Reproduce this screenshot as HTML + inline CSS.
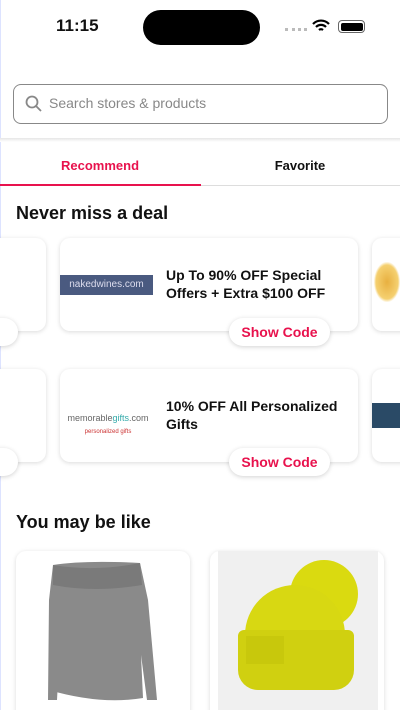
<!DOCTYPE html>
<html style="width:400px;height:710px;overflow:hidden"><head><meta charset="utf-8"><style>
*{margin:0;padding:0;box-sizing:border-box}
body{width:400px;height:710px;overflow:hidden;background:#fff;font-family:"Liberation Sans",sans-serif;position:relative;color:#111}
.abs{position:absolute}
.card{position:absolute;background:#fff;border-radius:10px;box-shadow:0 1px 5px rgba(0,0,0,.15)}
.pill{position:absolute;background:#fff;border-radius:14px;box-shadow:0 1px 5px rgba(0,0,0,.18);color:#e8124d;font-size:14px;font-weight:bold;text-align:center;line-height:28px}
.deal{position:absolute;font-size:14px;font-weight:bold;line-height:18px;color:#111}
h2{position:absolute;left:16px;font-size:18px;font-weight:bold}
</style></head><body>
<div class="abs" style="left:0;top:0;width:1px;height:710px;background:#dde3ff"></div>
<div class="abs" style="left:56px;top:16px;font-size:17px;font-weight:bold">11:15</div>
<div class="abs" style="left:143px;top:10px;width:117px;height:35px;border-radius:18px;background:#000"></div>
<div class="abs" style="left:285px;top:28px;width:22px;height:3px;border-top:3px dotted #bbb"></div>
<svg class="abs" style="left:312px;top:19px" width="18" height="14" viewBox="0 0 18 14"><path d="M1 5a11 11 0 0 1 16 0M4 8a7 7 0 0 1 10 0M7 11a3 3 0 0 1 4 0" stroke="#000" stroke-width="2.2" fill="none"/></svg>
<div class="abs" style="left:338px;top:20px;width:27px;height:13px;border:1px solid #666;border-radius:4px;padding:1.5px"><div style="width:100%;height:100%;background:#000;border-radius:2px"></div></div>
<div class="abs" style="left:13px;top:84px;width:375px;height:40px;border:1.5px solid #888;border-radius:8px"></div>
<svg class="abs" style="left:25px;top:95px" width="18" height="18" viewBox="0 0 18 18"><circle cx="7" cy="7" r="5.5" stroke="#888" stroke-width="1.8" fill="none"/><path d="M11 11l5 5" stroke="#888" stroke-width="1.8"/></svg>
<div class="abs" style="left:49px;top:95px;font-size:14px;color:#888">Search stores &amp; products</div>
<div class="abs" style="left:0;top:138px;width:400px;height:4px;background:linear-gradient(#e6e6e6,#fff)"></div>
<div class="abs" style="left:0;top:158px;width:200px;text-align:center;font-size:13px;font-weight:bold;color:#e8124d">Recommend</div>
<div class="abs" style="left:200px;top:158px;width:200px;text-align:center;font-size:13px;font-weight:bold">Favorite</div>
<div class="abs" style="left:0;top:185px;width:400px;height:1px;background:#ddd"></div>
<div class="abs" style="left:0;top:184px;width:201px;height:2px;background:#e8124d"></div>
<h2 style="top:203px">Never miss a deal</h2>
<div class="card" style="left:-60px;top:238px;width:106px;height:93px"></div>
<div class="pill" style="left:-40px;top:318px;width:58px;height:28px"></div>
<div class="card" style="left:60px;top:238px;width:298px;height:93px"></div>
<div class="abs" style="left:60px;top:275px;width:93px;height:20px;background:#4a5a80;color:#dde;font-size:10px;text-align:center;line-height:20px">nakedwines.com</div>
<div class="deal" style="left:166px;top:266px">Up To 90% OFF Special<br>Offers + Extra $100 OFF</div>
<div class="pill" style="left:229px;top:318px;width:101px;height:28px">Show Code</div>
<div class="card" style="left:372px;top:238px;width:60px;height:93px"></div>
<div class="abs" style="left:374px;top:262px;width:26px;height:40px;background:radial-gradient(#e8b040,#f5d070 60%,transparent 72%)"></div>
<div class="card" style="left:-60px;top:369px;width:106px;height:93px"></div>
<div class="pill" style="left:-40px;top:448px;width:58px;height:28px"></div>
<div class="card" style="left:60px;top:369px;width:298px;height:93px"></div>
<div class="abs" style="left:62px;top:400px;width:92px;height:32px;font-size:9px;color:#666;text-align:center;line-height:12px;padding-top:12px">memorable<span style="color:#3aa">gifts</span>.com<br><span style="color:#c33;font-size:6px">personalized gifts</span></div>
<div class="deal" style="left:166px;top:397px">10% OFF All Personalized<br>Gifts</div>
<div class="pill" style="left:229px;top:448px;width:101px;height:28px">Show Code</div>
<div class="card" style="left:372px;top:369px;width:60px;height:93px"></div>
<div class="abs" style="left:372px;top:403px;width:28px;height:25px;background:#2a4a66"></div>
<h2 style="top:512px">You may be like</h2>
<div class="card" style="left:16px;top:551px;width:174px;height:170px"></div>
<svg class="abs" style="left:45px;top:560px" width="115" height="145" viewBox="0 0 115 145"><path d="M8 5Q40 0 95 3L103 40 112 140 102 140 96 95 98 138Q55 145 4 130L14 100 12 140 3 140 4 40Z" fill="#8a8a8a"/><path d="M8 5Q50 12 95 3L97 25Q50 33 8 25Z" fill="#7a7a7a"/></svg>
<div class="card" style="left:210px;top:551px;width:174px;height:170px"></div>
<div class="abs" style="left:218px;top:551px;width:160px;height:159px;background:#f0f0f0"></div>
<div class="abs" style="left:290px;top:560px;width:68px;height:68px;border-radius:50%;background:#dada10"></div>
<div class="abs" style="left:245px;top:585px;width:100px;height:90px;border-radius:50px 50px 5px 5px;background:#d8d812"></div>
<div class="abs" style="left:238px;top:630px;width:116px;height:60px;border-radius:6px 6px 20px 20px;background:#d0d010"></div>
<div class="abs" style="left:246px;top:636px;width:38px;height:28px;background:#c8c80c"></div>
</body></html>
